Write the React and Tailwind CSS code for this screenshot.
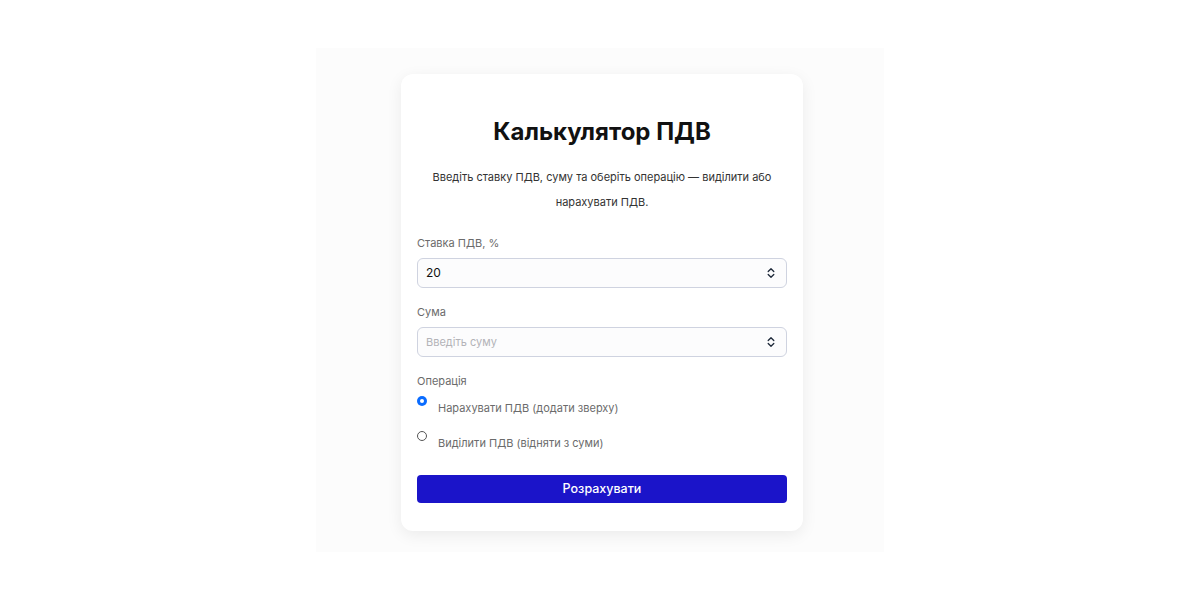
import React, { useState } from "react";

function Spinner() {
  return (
    <svg width="10" height="14" viewBox="0 0 10 14" className="text-gray-800">
      <path d="M2.2 5.5 L5 2.7 L7.8 5.5" fill="none" stroke="currentColor" strokeWidth="1.3" strokeLinecap="round" strokeLinejoin="round" />
      <path d="M2.2 8.5 L5 11.3 L7.8 8.5" fill="none" stroke="currentColor" strokeWidth="1.3" strokeLinecap="round" strokeLinejoin="round" />
    </svg>
  );
}

function NumberField({ label, value, placeholder, className }) {
  return (
    <div className={"flex flex-col " + (className || "")}>
      <label className="text-[11px] leading-[16px] text-[#6b6b6b] mb-[7px]">{label}</label>
      <div className="flex items-center h-[30px] rounded-[6px] border border-[#cfd3e0] bg-[#fcfcfd] pl-[8px] pr-[10px]">
        <span className={value ? "flex-1 text-[12px] text-[#111]" : "flex-1 text-[11px] text-[#b3b3b8]"}>
          {value || placeholder}
        </span>
        <Spinner />
      </div>
    </div>
  );
}

function Radio({ checked, label, onClick, className }) {
  return (
    <label className={"flex items-start cursor-pointer " + (className || "")} onClick={onClick}>
      <span
        className={
          checked
            ? "w-[10px] h-[10px] shrink-0 rounded-full bg-[#0a6cff] flex items-center justify-center"
            : "w-[10px] h-[10px] shrink-0 rounded-full border border-[#555]"
        }
      >
        {checked && <span className="w-[4px] h-[4px] rounded-full bg-white" />}
      </span>
      <span className="ml-[11px] mt-[4px] text-[11px] leading-[16px] text-[#6b6b6b]">{label}</span>
    </label>
  );
}

export default function App() {
  const [mode, setMode] = useState("add");

  return (
    <div className="min-h-screen bg-white flex items-center justify-center font-['Inter',sans-serif]">
      <div className="w-[568px] h-[504px] bg-[#fcfcfc] flex justify-center pt-[26px] pl-[4px]">
        <div className="w-[402px] h-[457px] bg-white rounded-[12px] shadow-[0_4px_16px_rgba(0,0,0,0.07)] px-[16px] pt-[42px]">
          <h1 className="text-center text-[24px] leading-[32px] font-bold text-[#111]">Калькулятор ПДВ</h1>
          <p className="text-center text-[11px] leading-[25px] text-[#333] mt-[17px] px-[6px]">
            Введіть ставку ПДВ, суму та оберіть операцію — виділити або нарахувати ПДВ.
          </p>

          <NumberField className="mt-[20px]" label="Ставка ПДВ, %" value="20" />
          <NumberField className="mt-[16px]" label="Сума" placeholder="Введіть суму" />

          <div className="mt-[16px]">
            <div className="text-[11px] leading-[16px] text-[#6b6b6b]">Операція</div>
            <Radio
              className="mt-[7px]"
              checked={mode === "add"}
              label="Нарахувати ПДВ (додати зверху)"
              onClick={() => setMode("add")}
            />
            <Radio
              className="mt-[15px]"
              checked={mode === "sub"}
              label="Виділити ПДВ (відняти з суми)"
              onClick={() => setMode("sub")}
            />
          </div>

          <button className="mt-[24px] w-full h-[28px] rounded-[4px] bg-[#1b14c9] text-white text-[12.5px] font-medium">
            Розрахувати
          </button>
        </div>
      </div>
    </div>
  );
}
